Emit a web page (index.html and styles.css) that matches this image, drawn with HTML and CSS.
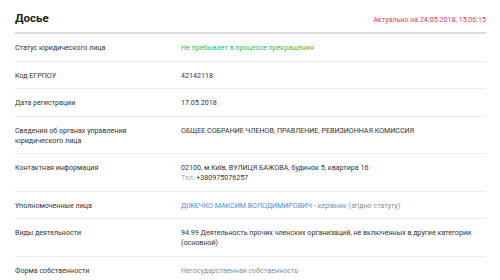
FILE: index.html
```html
<!DOCTYPE html>
<html>
<head>
<meta charset="utf-8">
<link rel="stylesheet" href="styles.css">
</head>
<body>
<div class="dossier">
  <div class="header">
    <h1 class="title">Досье</h1>
    <div class="actual">Актуально на 24.05.2018, 15:06:15</div>
  </div>
  <div class="row">
    <div class="label">Статус юридического лица</div>
    <div class="value green">Не пребывает в процессе прекращения</div>
  </div>
  <div class="row">
    <div class="label">Код ЕГРПОУ</div>
    <div class="value">42142118</div>
  </div>
  <div class="row">
    <div class="label">Дата регистрации</div>
    <div class="value">17.05.2018</div>
  </div>
  <div class="row">
    <div class="label">Сведения об органах управления юридического лица</div>
    <div class="value">ОБЩЕЕ СОБРАНИЕ ЧЛЕНОВ, ПРАВЛЕНИЕ, РЕВИЗИОННАЯ КОМИССИЯ</div>
  </div>
  <div class="row">
    <div class="label">Контактная информация</div>
    <div class="value">02100, м.Київ, ВУЛИЦЯ БАЖОВА, будинок 5, квартира 16<br><span class="muted">Тел:</span> +380975076257</div>
  </div>
  <div class="row">
    <div class="label">Уполномоченные лица</div>
    <div class="value"><span class="link">ДІЖЕЧКО МАКСИМ ВОЛОДИМИРОВИЧ</span> <span class="gray">- керівник (згідно статуту)</span></div>
  </div>
  <div class="row">
    <div class="label">Виды деятельности</div>
    <div class="value">94.99 Деятельность прочих членских организаций, не включенных в другие категории (основной)</div>
  </div>
  <div class="row last">
    <div class="label">Форма собственности</div>
    <div class="value gray">Негосударственная собственность</div>
  </div>
</div>
</body>
</html>
```
FILE: styles.css
```css
html, body {
  margin: 0;
  padding: 0;
  background: #fff;
}
body {
  font-family: Roboto, "Noto Sans", "Liberation Sans", sans-serif;
  color: #333;
  font-size: 7.1px;
}
.dossier {
  padding: 9px 14px 0 15px;
}
.header {
  display: flex;
  justify-content: space-between;
  align-items: flex-end;
  border-bottom: 2px solid #dcdcdc;
  padding-bottom: 5px;
}
.title {
  margin: 0;
  font-size: 11.5px;
  font-weight: 700;
  line-height: 18px;
  color: #222;
}
.actual {
  color: #f03a4f;
  font-size: 7.1px;
  line-height: 10px;
  padding-bottom: 2px;
}
.row {
  display: flex;
  padding: 9px 0 7.5px;
  border-bottom: 1px solid #ececec;
  line-height: 10px;
}
.row.last {
  border-bottom: none;
}
.label {
  width: 166px;
  flex: none;
  padding-right: 20px;
  box-sizing: border-box;
}
.value {
  flex: 1;
  min-width: 0;
}
.green { color: #2fc25b; }
.link { color: #4a90e2; }
.gray { color: #8c8c8c; }
.muted { color: #aaa; }
```
